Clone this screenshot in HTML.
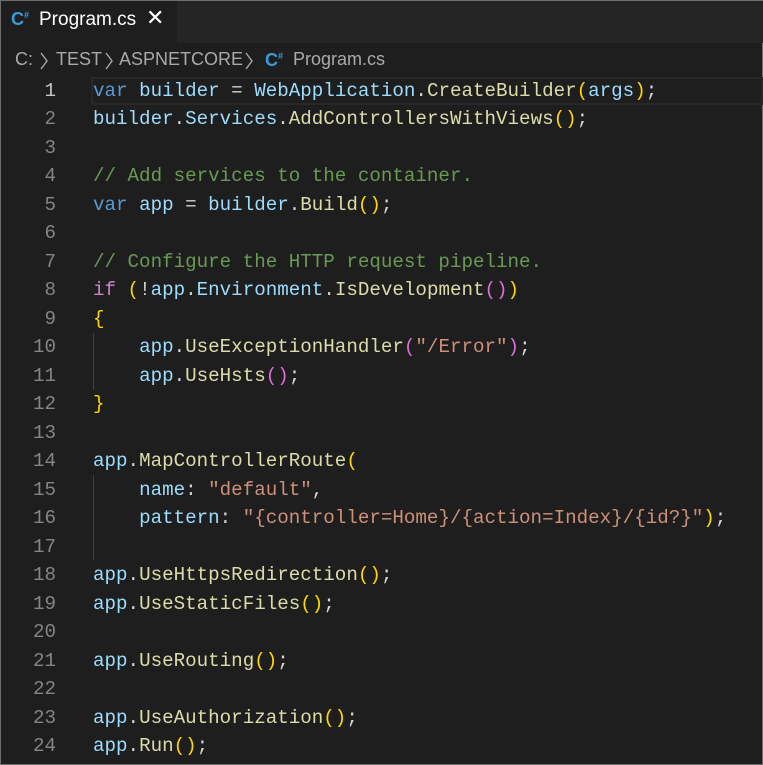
<!DOCTYPE html>
<html style="background:#1e1e1e"><head><meta charset="utf-8"><style>
*{margin:0;padding:0;box-sizing:border-box}
html,body{width:763px;height:765px;overflow:hidden}
body{background:#1e1e1e;position:relative;border:1px solid #6e6e6e}
.tabbar{position:absolute;left:0;top:0;width:763px;height:42px;background:#252526}
.tab{position:absolute;left:0;top:0;width:176px;height:42px;background:#1e1e1e;color:#fff;font:19px "Liberation Sans",sans-serif}
.tab .t{position:absolute;left:38px;top:8px}
.tab .x{position:absolute;left:145px;top:4px;font-size:22px}
.cs{position:absolute;color:#3a9bd6;font:bold 18px "Liberation Sans",sans-serif}
.cs sup{font-size:9px;vertical-align:7px}
.bc{position:absolute;top:48px;color:#a9a9a9;font:18px "Liberation Sans",sans-serif;white-space:pre}
.ch{position:absolute;top:51px}
.code{position:absolute;left:0;top:76px;font:19.2px/28.48px "Liberation Mono",monospace;white-space:pre;color:#d4d4d4}
.ln{position:absolute;left:0;width:55px;text-align:right;color:#858585}
.cl{position:absolute;left:92px}
.hl{position:absolute;left:90px;top:76px;width:672px;height:28px;border:2px solid #282828}
.g{position:absolute;left:92px;width:1px;background:#404040}
.k{color:#569cd6}.v{color:#9cdcfe}.f{color:#dcdcaa}.c{color:#6a9955}.s{color:#ce9178}.p{color:#c586c0}
.y{color:#ffd700}.m{color:#da70d6}
</style></head><body>
<div class="tabbar"><div class="tab"><span class="cs" style="left:10px;top:8px">C<sup>#</sup></span><span class="t">Program.cs</span><span class="x">✕</span></div></div>
<span class="bc" style="left:14px">C:</span>
<svg class="ch" style="left:38px" width="10" height="18"><polyline points="2,1 8,9 2,17" fill="none" stroke="#a9a9a9" stroke-width="1.4"/></svg>
<span class="bc" style="left:55px">TEST</span>
<svg class="ch" style="left:103px" width="10" height="18"><polyline points="2,1 8,9 2,17" fill="none" stroke="#a9a9a9" stroke-width="1.4"/></svg>
<span class="bc" style="left:118px">ASPNETCORE</span>
<svg class="ch" style="left:243px" width="10" height="18"><polyline points="2,1 8,9 2,17" fill="none" stroke="#a9a9a9" stroke-width="1.4"/></svg>
<span class="cs" style="left:264px;top:49px">C<sup>#</sup></span>
<span class="bc" style="left:292px">Program.cs</span>
<div class="hl"></div>
<div class="g" style="top:332px;height:57px"></div>
<div class="g" style="top:474px;height:85px"></div>
<div class="code">
<div class="ln" style="top:0;color:#c6c6c6">1</div><div class="cl" style="top:0"><span class="k">var</span> <span class="v">builder</span> = <span class="v">WebApplication</span>.<span class="f">CreateBuilder</span><span class="y">(</span><span class="v">args</span><span class="y">)</span>;</div>
<div class="ln" style="top:28.48px">2</div><div class="cl" style="top:28.48px"><span class="v">builder</span>.<span class="v">Services</span>.<span class="f">AddControllersWithViews</span><span class="y">()</span>;</div>
<div class="ln" style="top:56.96px">3</div>
<div class="ln" style="top:85.44px">4</div><div class="cl" style="top:85.44px"><span class="c">// Add services to the container.</span></div>
<div class="ln" style="top:113.92px">5</div><div class="cl" style="top:113.92px"><span class="k">var</span> <span class="v">app</span> = <span class="v">builder</span>.<span class="f">Build</span><span class="y">()</span>;</div>
<div class="ln" style="top:142.4px">6</div>
<div class="ln" style="top:170.88px">7</div><div class="cl" style="top:170.88px"><span class="c">// Configure the HTTP request pipeline.</span></div>
<div class="ln" style="top:199.36px">8</div><div class="cl" style="top:199.36px"><span class="p">if</span> <span class="y">(</span>!<span class="v">app</span>.<span class="v">Environment</span>.<span class="f">IsDevelopment</span><span class="m">()</span><span class="y">)</span></div>
<div class="ln" style="top:227.84px">9</div><div class="cl" style="top:227.84px"><span class="y">{</span></div>
<div class="ln" style="top:256.32px">10</div><div class="cl" style="top:256.32px">    <span class="v">app</span>.<span class="f">UseExceptionHandler</span><span class="m">(</span><span class="s">"/Error"</span><span class="m">)</span>;</div>
<div class="ln" style="top:284.8px">11</div><div class="cl" style="top:284.8px">    <span class="v">app</span>.<span class="f">UseHsts</span><span class="m">()</span>;</div>
<div class="ln" style="top:313.28px">12</div><div class="cl" style="top:313.28px"><span class="y">}</span></div>
<div class="ln" style="top:341.76px">13</div>
<div class="ln" style="top:370.24px">14</div><div class="cl" style="top:370.24px"><span class="v">app</span>.<span class="f">MapControllerRoute</span><span class="y">(</span></div>
<div class="ln" style="top:398.72px">15</div><div class="cl" style="top:398.72px">    <span class="v">name</span>: <span class="s">"default"</span>,</div>
<div class="ln" style="top:427.2px">16</div><div class="cl" style="top:427.2px">    <span class="v">pattern</span>: <span class="s">"{controller=Home}/{action=Index}/{id?}"</span><span class="y">)</span>;</div>
<div class="ln" style="top:455.68px">17</div>
<div class="ln" style="top:484.16px">18</div><div class="cl" style="top:484.16px"><span class="v">app</span>.<span class="f">UseHttpsRedirection</span><span class="y">()</span>;</div>
<div class="ln" style="top:512.64px">19</div><div class="cl" style="top:512.64px"><span class="v">app</span>.<span class="f">UseStaticFiles</span><span class="y">()</span>;</div>
<div class="ln" style="top:541.12px">20</div>
<div class="ln" style="top:569.6px">21</div><div class="cl" style="top:569.6px"><span class="v">app</span>.<span class="f">UseRouting</span><span class="y">()</span>;</div>
<div class="ln" style="top:598.08px">22</div>
<div class="ln" style="top:626.56px">23</div><div class="cl" style="top:626.56px"><span class="v">app</span>.<span class="f">UseAuthorization</span><span class="y">()</span>;</div>
<div class="ln" style="top:655.04px">24</div><div class="cl" style="top:655.04px"><span class="v">app</span>.<span class="f">Run</span><span class="y">()</span>;</div>
</div>
</body></html>
